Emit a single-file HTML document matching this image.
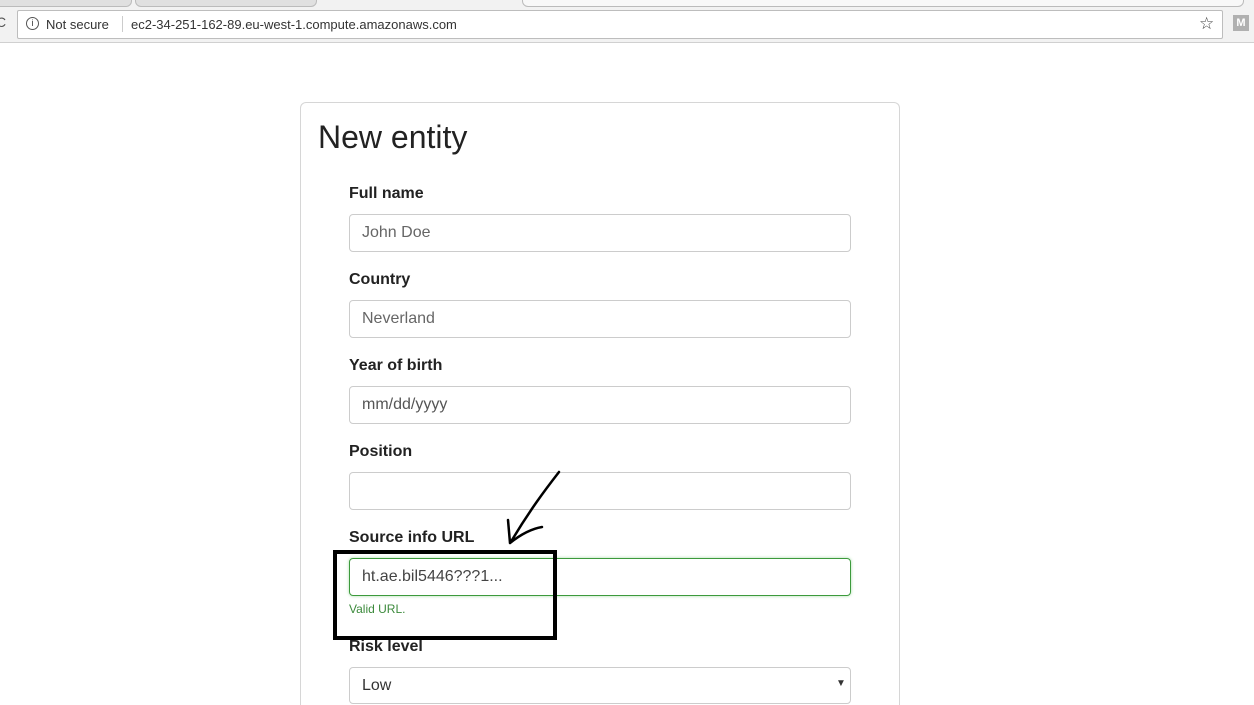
<!DOCTYPE html>
<html><head><style>
html,body{margin:0;width:1254px;height:705px;overflow:hidden}
body{background:#fff;font-family:"Liberation Sans",Arial,sans-serif;position:relative}
.top{position:absolute;left:0;top:0;width:1254px;height:42px;background:#f2f2f2;border-bottom:1px solid #d0d0d0}
.tab{position:absolute;top:-4px;height:9px;background:#e0e0e0;border:1px solid #bbb;border-radius:0 0 6px 6px}
.omni{position:absolute;left:17px;top:10px;width:1204px;height:27px;background:#fff;border:1px solid #bdbdbd;border-radius:2px;font-size:13px;color:#333}
.card{position:absolute;left:300px;top:102px;width:600px;height:603px;border:1px solid #d6d6d6;border-bottom:none;border-radius:6px 6px 0 0;box-sizing:border-box}
h1{position:absolute;left:318px;top:119px;margin:0;font-weight:400;font-size:32px;color:#222}
.lab{position:absolute;left:349px;font-weight:bold;font-size:16px;color:#222}
.in{position:absolute;left:349px;width:500px;height:36px;border:1px solid #ccc;border-radius:4px;font-size:16px;color:#666;box-sizing:content-box}
.in span{position:absolute;left:12px;top:9px}
</style></head><body>
<div class="top">
<div class="tab" style="left:-10px;width:140px"></div>
<div class="tab" style="left:135px;width:180px"></div>
<div class="tab" style="left:522px;width:720px;background:#f8f8f8"></div>
<div style="position:absolute;left:-4px;top:14px;font-size:14px;color:#555">C</div>
<div class="omni">
<div style="position:absolute;left:8px;top:6px;width:11px;height:11px;border:1px solid #555;border-radius:50%;font-size:9px;text-align:center;line-height:11px">i</div>
<div style="position:absolute;left:28px;top:6px">Not secure</div>
<div style="position:absolute;left:104px;top:5px;width:1px;height:16px;background:#ccc"></div>
<div style="position:absolute;left:113px;top:6px">ec2-34-251-162-89.eu-west-1.compute.amazonaws.com</div>
<div style="position:absolute;left:1181px;top:3px;font-size:17px;color:#444">☆</div>
</div>
<div style="position:absolute;left:1233px;top:15px;width:16px;height:16px;background:#b0b0b0;color:#fff;font-size:11px;font-weight:bold;text-align:center;line-height:16px">M</div>
</div>
<div class="card"></div>
<h1>New entity</h1>
<div class="lab" style="top:185px">Full name</div>
<div class="in" style="top:214px"><span>John Doe</span></div>
<div class="lab" style="top:271px">Country</div>
<div class="in" style="top:300px"><span>Neverland</span></div>
<div class="lab" style="top:357px">Year of birth</div>
<div class="in" style="top:386px"><span style="color:#555">mm/dd/yyyy</span></div>
<div class="lab" style="top:443px">Position</div>
<div class="in" style="top:472px"></div>
<div class="lab" style="top:529px">Source info URL</div>
<div class="in" style="top:558px;border-color:#3c9a3c;box-shadow:0 0 3px #a8dca8"><span style="color:#444">ht.ae.bil5446???1...</span></div>
<div style="position:absolute;left:349px;top:602px;font-size:12px;color:#3c8a3c">Valid URL.</div>
<div class="lab" style="top:638px">Risk level</div>
<div class="in" style="top:667px;height:35px"><span style="color:#333">Low</span><span style="left:486px;top:10px;font-size:10px;color:#333">▼</span></div>
<div style="position:absolute;left:333px;top:550px;width:216px;height:82px;border:4px solid #000"></div>
<svg style="position:absolute;left:500px;top:465px" width="70" height="85"><path d="M59 7 C45 25 30 45 12 75 M10 78 L8 55 M10 78 C20 70 30 64 42 62" stroke="#000" stroke-width="2.5" fill="none" stroke-linecap="round"/></svg>
</body></html>
